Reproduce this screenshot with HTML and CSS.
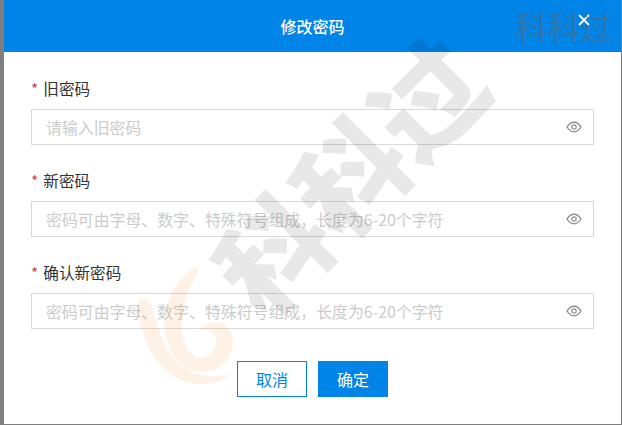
FILE: index.html
```html
<!DOCTYPE html>
<html lang="zh">
<head>
<meta charset="utf-8">
<title>修改密码</title>
<link rel="stylesheet" href="styles.css">
</head>
<body>
<div class="modal">
  <header class="modal-header">
    <h1 class="modal-title">修改密码</h1>
    <button class="close" type="button" aria-label="关闭">
      <svg width="12" height="12" viewBox="0 0 12 12"><path d="M1 1l10 10M11 1L1 11" stroke="#fff" stroke-width="1.8" fill="none"/></svg>
    </button>
  </header>
  <form class="form">
    <div class="field">
      <label class="label"><span class="req">*</span>旧密码</label>
      <div class="input"><span class="placeholder">请输入旧密码</span>
        <svg class="eye" width="16" height="12" viewBox="0 0 16 12"><path d="M1 6c1.8-3 4.2-4.8 7-4.8S13.200 3 15 6c-1.800 3-4.200 4.800-7 4.800S2.800 9 1 6z" fill="none" stroke="#8f8f8f" stroke-width="1.400"/><circle cx="8" cy="6" r="2.200" fill="none" stroke="#8f8f8f" stroke-width="1.200"/></svg>
      </div>
    </div>
    <div class="field">
      <label class="label"><span class="req">*</span>新密码</label>
      <div class="input"><span class="placeholder">密码可由字母、数字、特殊符号组成，长度为6-20个字符</span>
        <svg class="eye" width="16" height="12" viewBox="0 0 16 12"><path d="M1 6c1.8-3 4.2-4.8 7-4.8S13.200 3 15 6c-1.800 3-4.200 4.800-7 4.800S2.800 9 1 6z" fill="none" stroke="#8f8f8f" stroke-width="1.400"/><circle cx="8" cy="6" r="2.200" fill="none" stroke="#8f8f8f" stroke-width="1.200"/></svg>
      </div>
    </div>
    <div class="field">
      <label class="label"><span class="req">*</span>确认新密码</label>
      <div class="input"><span class="placeholder">密码可由字母、数字、特殊符号组成，长度为6-20个字符</span>
        <svg class="eye" width="16" height="12" viewBox="0 0 16 12"><path d="M1 6c1.8-3 4.2-4.8 7-4.8S13.200 3 15 6c-1.800 3-4.200 4.800-7 4.800S2.800 9 1 6z" fill="none" stroke="#8f8f8f" stroke-width="1.400"/><circle cx="8" cy="6" r="2.200" fill="none" stroke="#8f8f8f" stroke-width="1.200"/></svg>
      </div>
    </div>
    <div class="actions">
      <button class="btn btn-cancel" type="button">取消</button>
      <button class="btn btn-ok" type="button">确定</button>
    </div>
  </form>
  <svg class="wm-logo" width="110" height="130" viewBox="130 260 110 130">
    <path d="M197 268C199 270 198 273 196 276C187 290 181 310 182 330C182 345 191 358 201 358C211 358 216 348 216 340C216 333 208 329 199 329C207 322 218 320 225 325C233 331 235 342 231 353C226 366 212 373 198 372C182 370 170 355 166 337C160 310 172 285 190 271C193 269 195 267 197 268Z"/>
    <path d="M140 300C146 297 151 303 153 311C158 330 165 350 178 363C190 374 210 380 231 374C222 381 210 385 198 384C175 383 155 365 145 338C140 325 136 312 137 304C138 302 139 301 140 300Z"/>
  </svg>
  <div class="wm-big">科科过</div>
  <div class="wm-corner">科科过</div>
</div>
</body>
</html>
```
FILE: styles.css
```css
* { box-sizing: border-box; }
html, body { margin: 0; height: 100%; }
body {
  background: #7f7f7f;
  padding: 0 1px 1px 4px;
  font-family: "Noto Sans CJK SC", "Liberation Sans", sans-serif;
  overflow: hidden;
}
.modal {
  position: relative;
  height: 424px;
  background: #fff;
  overflow: hidden;
}
.modal-header {
  height: 52px;
  background: #0084e8;
  display: flex;
  align-items: center;
  justify-content: center;
}
.modal-title {
  margin: 0;
  font-size: 16px;
  font-weight: 500;
  color: #fff;
}
.close {
  position: absolute;
  left: 574px;
  top: 14px;
  padding: 0;
  border: 0;
  background: none;
  display: flex;
}
.form { padding: 24px 27px 0; }
.field { margin-bottom: 23px; }
.label {
  display: block;
  height: 24px;
  line-height: 24px;
  margin-bottom: 9px;
  font-size: 15.6px;
  color: #333;
}
.req { color: #d9434e; margin-right: 5px; }
.input {
  height: 36px;
  border: 1px solid #d9d9d9;
  display: flex;
  align-items: center;
  justify-content: space-between;
  padding: 0 11px 0 14px;
}
.placeholder { font-size: 15.9px; line-height: 33px; color: #ccc; }
.eye { flex: none; }
.actions {
  display: flex;
  justify-content: center;
  gap: 11px;
  margin-top: 32px;
}
.btn {
  width: 70px;
  height: 36px;
  font: inherit;
  font-size: 16px;
  padding: 0;
}
.btn-cancel { background: #fff; color: #0084e8; border: 1px solid #0084e8; }
.btn-ok { background: #0084e8; color: #fff; border: 1px solid #0084e8; }
.wm-logo { position: absolute; left: 126px; top: 260px; fill: #f89632; opacity: .12; pointer-events: none; }
.wm-big {
  position: absolute;
  left: 163px;
  top: 113px;
  width: 360px;
  text-align: center;
  font-size: 109px;
  font-weight: 900;
  line-height: 120px;
  color: rgba(0,0,0,.09);
  white-space: nowrap;
  transform: rotate(-45deg);
  pointer-events: none;
}
.wm-corner {
  position: absolute;
  left: 511px;
  top: 6px;
  font-size: 32.5px;
  line-height: 40px;
  color: rgba(100,100,100,.48);
  pointer-events: none;
}
```
